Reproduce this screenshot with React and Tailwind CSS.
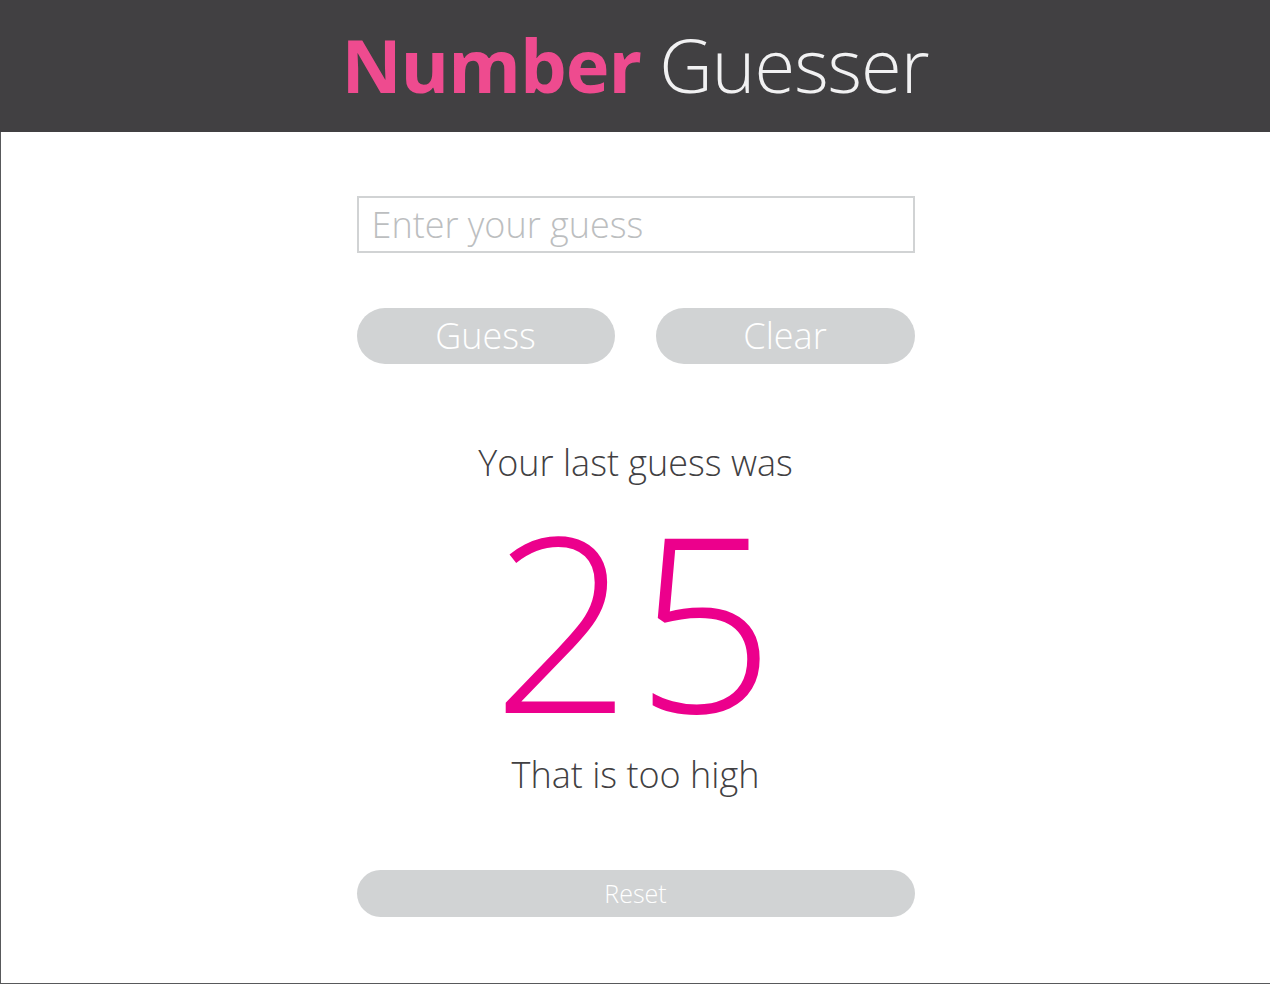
import React, { useState } from 'react';

const App = () => {
  const [guess, setGuess] = useState('');

  return (
    <div className="min-h-[984px] w-full flex flex-col font-['Open_Sans',sans-serif]">
      {/* Header */}
      <header className="h-[132px] bg-[#414042] flex items-center justify-center">
        <h1 className="text-[74px] leading-none tracking-[-1px] -mt-[2px]">
          <span className="font-bold text-[#ee4b8f]">Number</span>{' '}
          <span className="font-light text-[#f1f1f2]">Guesser</span>
        </h1>
      </header>

      {/* Body */}
      <main className="flex-1 bg-white border-l border-b border-[#58595b] flex flex-col items-center pt-[64px]">
        <div className="w-[558px] flex flex-col">
          <input
            type="text"
            value={guess}
            onChange={(e) => setGuess(e.target.value)}
            placeholder="Enter your guess"
            className="h-[57px] w-full border-2 border-[#d1d3d4] px-[13px] text-[36px] font-light text-[#414042] placeholder:text-[#bcbec0] outline-none"
          />

          <div className="flex justify-between mt-[55px]">
            <button className="w-[258px] h-[56px] rounded-full bg-[#d1d3d4] text-white text-[36px] font-light leading-none">
              Guess
            </button>
            <button className="w-[259px] h-[56px] rounded-full bg-[#d1d3d4] text-white text-[36px] font-light leading-none">
              Clear
            </button>
          </div>

          <p className="mt-[81px] text-center text-[36px] font-light text-[#414042] leading-none">
            Your last guess was
          </p>

          <p className="mt-[15px] text-center text-[244px] font-light text-[#ec008c] leading-none tracking-[4px]">
            25
          </p>

          <p className="mt-[17px] text-center text-[36px] font-light text-[#414042] leading-none">
            That is too high
          </p>

          <button className="mt-[77px] w-full h-[47px] rounded-full bg-[#d1d3d4] text-white text-[25px] font-light leading-none">
            Reset
          </button>
        </div>
      </main>
    </div>
  );
};

export default App;
